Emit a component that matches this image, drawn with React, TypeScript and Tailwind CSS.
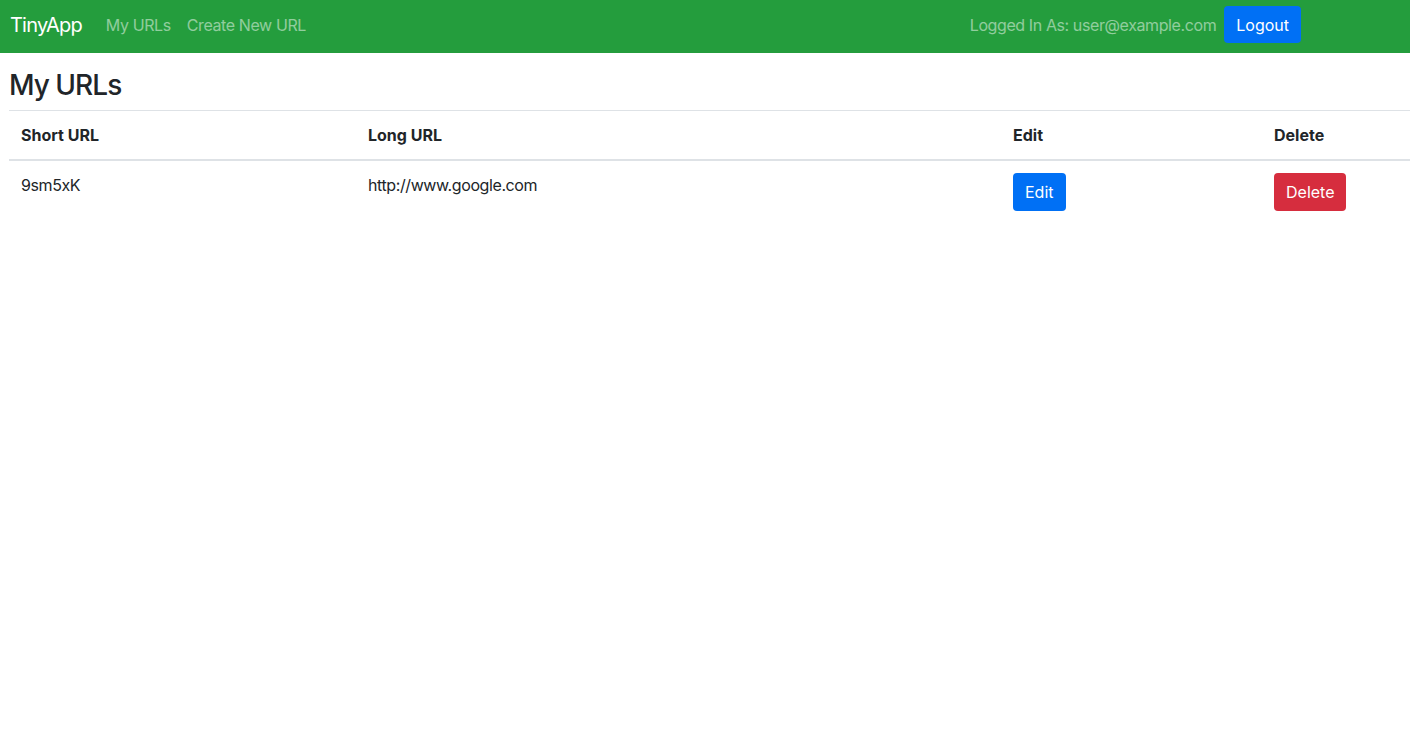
export default function App() {
  const font = { fontFamily: 'Inter, "Noto Sans", sans-serif' };
  return (
    <div className="min-h-screen bg-white text-[#212529] tracking-[-0.025em]" style={font}>
      <nav className="flex h-[53px] items-center bg-[#249d3d] pb-[4px] pl-[10px] pr-[109px]">
        <span className="mr-[16px] text-[20px] leading-[30px] tracking-[-0.04em] text-white">TinyApp</span>
        <a className="px-[8px] text-[16px] leading-6 text-white/50">My URLs</a>
        <a className="px-[8px] text-[16px] leading-6 text-white/50">Create New URL</a>
        <div className="ml-auto flex items-center gap-[8px]">
          <span className="text-[16px] leading-6 text-white/50">Logged In As: user@example.com</span>
          <button className="h-[37px] rounded-[4px] bg-[#0070f5] px-[12px] text-[16px] tracking-normal text-white">Logout</button>
        </div>
      </nav>
      <main className="pl-[9px] pt-[15px]">
        <h3 className="mb-[8px] text-[28px] leading-[34px] font-medium tracking-[-0.035em]">My URLs</h3>
        <table className="w-full border-collapse border-t border-[#dee2e6] text-left text-[16px]">
          <thead>
            <tr className="border-b-2 border-[#dee2e6]">
              <th className="w-[347px] p-[12px] leading-6 font-bold tracking-normal">Short URL</th>
              <th className="w-[645px] p-[12px] leading-6 font-bold tracking-normal">Long URL</th>
              <th className="w-[261px] p-[12px] leading-6 font-bold tracking-normal">Edit</th>
              <th className="p-[12px] leading-6 font-bold tracking-normal">Delete</th>
            </tr>
          </thead>
          <tbody>
            <tr>
              <td className="p-[12px] align-top leading-6">9sm5xK</td>
              <td className="p-[12px] align-top leading-6">http://www.google.com</td>
              <td className="p-[12px] align-top">
                <button className="h-[38px] rounded-[4px] bg-[#0070f5] px-[12px] text-[16px] leading-6 tracking-normal text-white">Edit</button>
              </td>
              <td className="p-[12px] align-top">
                <button className="h-[38px] rounded-[4px] bg-[#d62d3e] px-[12px] text-[16px] leading-6 tracking-normal text-white">Delete</button>
              </td>
            </tr>
          </tbody>
        </table>
      </main>
    </div>
  );
}
